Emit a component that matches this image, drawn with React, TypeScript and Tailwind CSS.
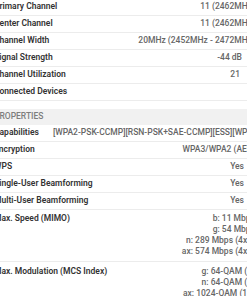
type Row = {
  label: string;
  value: string[];
  valueClass?: string;
};

const radioRows: Row[] = [
  { label: 'Primary Channel', value: ['11 (2462MHz)'] },
  { label: 'Center Channel', value: ['11 (2462MHz)'] },
  { label: 'Channel Width', value: ['20MHz (2452MHz - 2472MHz)'] },
  { label: 'Signal Strength', value: ['-44 dB'], valueClass: 'pr-[13px]' },
  { label: 'Channel Utilization', value: ['21'], valueClass: 'pr-[15px]' },
  { label: 'Connected Devices', value: [] },
];

const propertyRows: Row[] = [
  {
    label: 'Capabilities',
    value: ['[WPA2-PSK-CCMP][RSN-PSK+SAE-CCMP][ESS][WPS]'],
    valueClass: 'text-[#4d6f9f]',
  },
  { label: 'Encryption', value: ['WPA3/WPA2 (AES)'] },
  { label: 'WPS', value: ['Yes'], valueClass: 'pr-[11px]' },
  { label: 'Single-User Beamforming', value: ['Yes'], valueClass: 'pr-[11px]' },
  { label: 'Multi-User Beamforming', value: ['Yes'], valueClass: 'pr-[11px]' },
  {
    label: 'Max. Speed (MIMO)',
    value: ['b: 11 Mbps', 'g: 54 Mbps', 'n: 289 Mbps (4x4)', 'ax: 574 Mbps (4x4)'],
  },
  {
    label: 'Max. Modulation (MCS Index)',
    value: ['g: 64-QAM (7)', 'n: 64-QAM (7)', 'ax: 1024-QAM (11)'],
  },
];

const DetailRow = ({ row }: { row: Row }) => {
  const multi = row.value.length > 1;
  return (
    <div
      className={`flex gap-[12px] border-b border-[#ececec] leading-[11px] ${
        multi ? 'items-start pt-[3.5px] pb-[4px]' : 'items-center h-[17px]'
      }`}
    >
      <span className="shrink-0 whitespace-nowrap font-semibold text-[#333333]">{row.label}</span>
      <div
        className={`flex-1 min-w-0 whitespace-nowrap text-right font-medium text-[#666666] ${
          row.valueClass ?? ''
        }`}
      >
        {row.value.map((line) => (
          <div key={line}>{line}</div>
        ))}
      </div>
    </div>
  );
};

export default function App() {
  return (
    <div className="w-[247px] h-[296px] overflow-hidden bg-white">
      <div
        className="w-[261px] -ml-[6px] -mt-[1.5px] text-[8.5px]"
        style={{ fontFamily: 'Roboto, "Noto Sans", sans-serif' }}
      >
        {radioRows.map((row) => (
          <DetailRow key={row.label} row={row} />
        ))}

        <div className="mt-[8px] h-[16px] flex items-center bg-[#f1f1f1] font-medium text-[#7d7d7d] uppercase">
          Properties
        </div>

        {propertyRows.map((row) => (
          <DetailRow key={row.label} row={row} />
        ))}
      </div>
    </div>
  );
}
